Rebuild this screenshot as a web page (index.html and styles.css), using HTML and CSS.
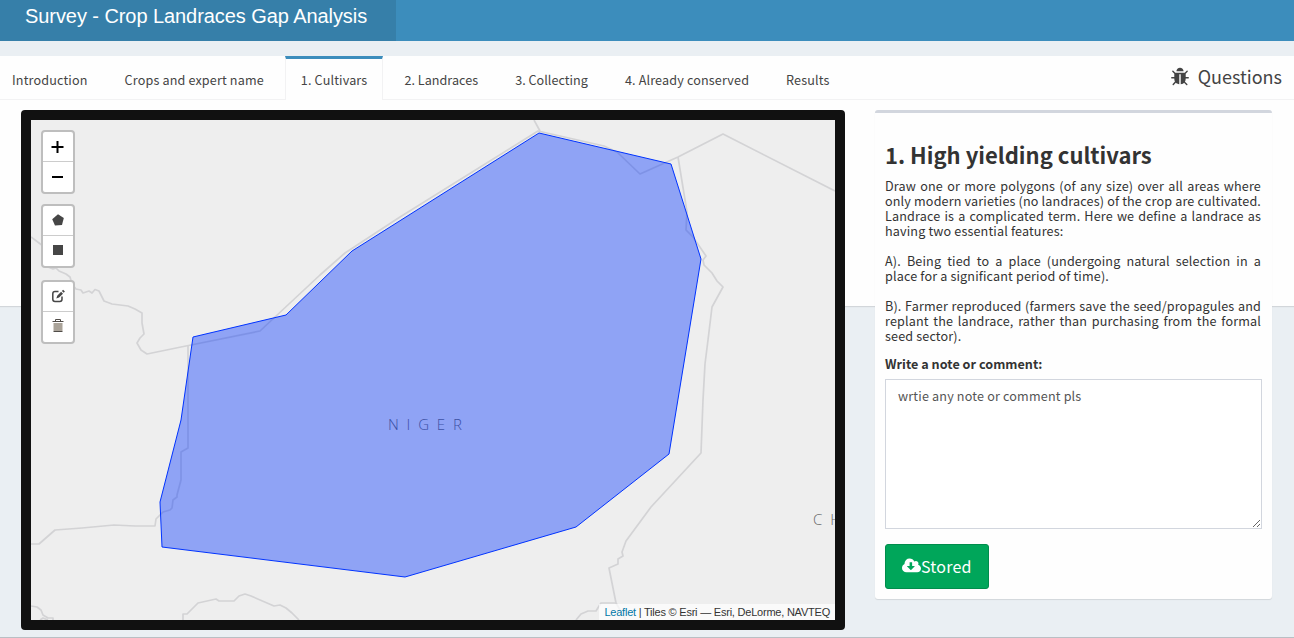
FILE: index.html
```html
<!DOCTYPE html>
<html lang="en">
<head>
<meta charset="utf-8">
<title>Survey - Crop Landraces Gap Analysis</title>
<link rel="stylesheet" href="styles.css">
</head>
<body>
<header class="header"><div class="logo">Survey - Crop Landraces Gap Analysis</div></header>
<main class="panel">
  <nav class="tabs">
    <a class="tab">Introduction</a>
    <a class="tab">Crops and expert name</a>
    <a class="tab active">1. Cultivars</a>
    <a class="tab snug">2. Landraces</a>
    <a class="tab snug">3. Collecting</a>
    <a class="tab">4. Already conserved</a>
    <a class="tab">Results</a>
    <div class="questions">
      <svg class="bug" viewBox="0 0 1792 1792"><path d="M1696 960q0 26-19 45t-45 19h-224q0 171-67 290l208 209q19 19 19 45t-19 45q-18 19-45 19t-45-19l-198-197q-5 5-15 13t-42 28.500-65 36.500-82 29-97 13v-896h-128v896q-51 0-101.500-13.500t-87-33-66-39-43.500-32.500l-15-14-183 207q-20 21-48 21-24 0-43-16-19-18-20.500-44.500t15.500-46.500l202-227q-58-114-58-274h-224q-26 0-45-19t-19-45 19-45 45-19h224v-294l-173-173q-19-19-19-45t19-45 45-19 45 19l173 173h844l173-173q19-19 45-19t45 19 19 45-19 45l-173 173v294h224q26 0 45 19t19 45zm-480-576h-640q0-133 93.500-226.500t226.500-93.500 226.500 93.500 93.500 226.500z"/></svg>
      <span>Questions</span>
    </div>
  </nav>
  <div class="content">
    <section class="map">
      <svg class="map-canvas" viewBox="31 120 804 500">
        <g class="borders">
          <path d="M31 237L43 246L48 267L53 269L56 268L59 271L66 274L70 277L72 284L76 289L81 290L83 293L89 291L92 293L95 289.500L99 291L104 301L112 304L128 306L135 309L142 313V323L144 334L140 338L137 343L141 350L147 354L181 347L260 331L290 303L320 275L345 253L400 217L538 131L604 146L617 152L640 174L678 157L723 134L835 191"/>
          <path d="M534 120L540 131"/>
          <path d="M678 157L687 212L686 230L693 237L706 256L703 260L704 265L712 273L717 281L723 287L712 307L708 340L705 364L703 400L701 453L651 507L626 541L622 552L623 556L618 559V564L609 568L616 603L626 620"/>
          <path d="M576 620L581 614L588 611H596L601 603H616"/>
          <path d="M188 345V448L181 452V480L177 495V497L173 500L172 508L170 510L163 512L156 519L155 526H135L114 525L82 528L55 530L39 544H31"/>
          <path d="M31 606L37 607L41 610L43 615L48 618H53V620M40 620L43 618L48 620"/>
          <path d="M183 620V614H187L198 603L216 599L219 601H234L239 596L245 594L251 596L274 606L280 605L286 608L292 613L299 620"/>
        </g>
        <g class="country"><text x="388" y="430" textLength="74">NIGER</text><text x="813" y="525" letter-spacing="8">CH</text></g>
        <path class="area" d="M539 133L671 164L701 259L669 454L576 527L405 577L162 547L160 502L181 420L193 337L286 315L352 251Z"/>
      </svg>
      <div class="controls">
        <div class="bar"><a><svg viewBox="0 0 30 30"><path class="sign" d="M8.500 15H20.500M14.500 9V21"/></svg></a><a><svg viewBox="0 0 30 30"><path class="sign" d="M9 15H20"/></svg></a></div>
        <div class="bar"><a><svg viewBox="0 0 30 30"><path class="tool" d="M15 8.200L20.800 12L19 19L12 19.500L9.200 13.200Z"/></svg></a><a><svg viewBox="0 0 30 30"><path class="tool" d="M10 9H20V19H10Z"/></svg></a></div>
        <div class="bar"><a><svg viewBox="0 0 30 30"><path class="pen" d="M15.500 9.500H12Q9.800 9.500 9.800 11.700V17.300Q9.800 19.500 12 19.500H16.800Q19 19.500 19 17.300V14.500"/><path class="tool" d="M13.300 16.500L14.200 13.700L18.100 9.800L20 11.700L16.100 15.600ZM18.900 9L20.100 7.800L21.900 9.600L20.700 10.800Z"/></svg></a><a><svg viewBox="0 0 30 30"><path class="bin" d="M10.500 11H19.500V19H10.500Z"/><path class="lid" d="M9.500 9.500H20.500M12.500 9V7.500H17.500V9M10.500 19.500H19.500"/></svg></a></div>
      </div>
      <div class="attribution"><a>Leaflet</a> | Tiles © Esri — Esri, DeLorme, NAVTEQ</div>
    </section>
    <aside class="box">
      <h1>1. High yielding cultivars</h1>
      <p>Draw one or more polygons (of any size) over all areas where only modern varieties (no landraces) of the crop are cultivated. Landrace is a complicated term. Here we define a landrace as having two essential features:</p>
      <p>A). Being tied to a place (undergoing natural selection in a place for a significant period of time).</p>
      <p>B). Farmer reproduced (farmers save the seed/propagules and replant the landrace, rather than purchasing from the formal seed sector).</p>
      <label for="note">Write a note or comment:</label>
      <textarea id="note">wrtie any note or comment pls</textarea>
      <button class="stored"><svg viewBox="-64 0 1920 1792"><path d="M1216 928q0-14-9-23t-23-9h-224v-352q0-13-9.500-22.500t-22.500-9.500h-192q-13 0-22.500 9.500t-9.500 22.500v352h-224q-13 0-22.500 9.500t-9.500 22.500q0 14 9 23l352 352q9 9 23 9t23-9l351-351q10-12 10-24zm640 224q0 159-112.500 271.500t-271.500 112.500h-1088q-185 0-316.500-131.500t-131.500-316.500q0-130 70-240t188-165q-2-30-2-43 0-212 150-362t362-150q156 0 285.500 87t188.500 231q71-62 166-62 106 0 181 75t75 181q0 76-41 138 130 31 213.500 135.500t83.500 238.500z"/></svg><span>Stored</span></button>
    </aside>
  </div>
</main>
</body>
</html>
```

FILE: styles.css
```css
* { box-sizing: border-box; }
body {
  margin: 0;
  height: 638px;
  overflow: hidden;
  background: #eaeff3;
  border-bottom: 1px solid #b9bfc4;
  color: #333;
  font: 12.6px/15px "Noto Sans CJK SC", "Noto Sans", sans-serif;
  letter-spacing: .15px;
}
.header { height: 41px; background: #3c8dbc; }
.logo {
  width: 396px;
  height: 41px;
  padding-left: 25px;
  background: #367fa9;
  color: #fff;
  font: 20px/32px "Liberation Sans", Arial, sans-serif;
  letter-spacing: -.07px;
  white-space: nowrap;
}
.panel { height: 250px; margin-top: 15px; background: #fefefe; box-shadow: 0 1px 1px rgba(0,0,0,.1); }
.tabs {
  display: flex;
  gap: 5px;
  height: 44px;
  margin-left: -4px;
  border-bottom: 1px solid #f2f2f3;
  white-space: nowrap;
}
.tab {
  height: 44px;
  padding: 13px 15px 0;
  border: 1px solid transparent;
  border-width: 3px 1px 0;
  color: #444;
}
.snug { letter-spacing: .03px; }
.active { background: #fefefe; border-color: #3c8dbc #f2f2f3; }
.questions {
  display: flex;
  align-items: center;
  gap: 8px;
  height: 41px;
  margin-left: auto;
  padding-right: 12px;
  color: #444;
  font-size: 18px;
  letter-spacing: 0;
}
.bug { width: 20px; height: 20px; fill: #444; }
.content { display: flex; align-items: flex-start; gap: 30px; padding: 10px 22px 0 21px; }
.map { position: relative; width: 824px; height: 520px; border: 10px solid #111; border-radius: 4px; background: #eee; }
.map-canvas { display: block; width: 804px; height: 500px; }
.borders { fill: none; stroke: #d3d3d5; stroke-width: 1.7; stroke-linejoin: round; }
.country { fill: #666; font: 300 15px "Open Sans", "Noto Sans", sans-serif; }
.area { fill: #03f; fill-opacity: .4; stroke: #03f; stroke-width: 1; }
.controls { position: absolute; left: 10px; top: 10px; display: grid; gap: 10px; }
.bar { width: 34px; height: 64px; border: 2px solid #bebebe; border-radius: 4px; background: #fff; }
.bar:last-child { margin-top: 2px; }
.bar a { display: block; height: 30px; }
.bar a:first-child { border-bottom: 1px solid #ccc; }
.bar svg { display: block; width: 30px; height: 30px; }
.sign { fill: none; stroke: #000; stroke-width: 2; }
.tool { fill: #464646; }
.pen { fill: none; stroke: #464646; stroke-width: 1.5; }
.bin { fill: #aaa399; }
.lid { fill: none; stroke: #504c48; }
.attribution {
  position: absolute;
  right: 0;
  bottom: 0;
  height: 16px;
  padding: 0 5px;
  background: rgba(255,255,255,.7);
  font: 11px/16px "Liberation Sans", Arial, sans-serif;
  letter-spacing: -.22px;
  white-space: nowrap;
}
.attribution a { color: #0078a8; }
.box {
  width: 397px;
  height: 489px;
  padding: 31px 10px 0;
  border-top: 3px solid #d2d6de;
  border-radius: 3px;
  background: #fefefe;
  box-shadow: 0 1px 1px rgba(0,0,0,.1);
}
h1 { margin: 0 0 14px; font-size: 22px; line-height: 20px; font-weight: 700; letter-spacing: 0; }
p { width: 376px; margin: 0 0 15px; text-align: justify; }
label { display: block; margin-top: -2px; font-weight: 700; letter-spacing: .03px; }
textarea {
  display: block;
  width: 377px;
  height: 150px;
  margin: 8px 0 15px;
  padding: 8px 12px;
  border: 1px solid #d2d6de;
  background: #fff;
  color: #555;
  font: inherit;
  letter-spacing: .17px;
  resize: vertical;
}
.stored {
  display: flex;
  align-items: center;
  width: 104px;
  height: 45px;
  padding: 0 16px 1px;
  border: 1px solid #008d4c;
  border-radius: 3px;
  background: #00a65a;
  color: #fff;
  font: 16px/24px "Noto Sans CJK SC", "Noto Sans", sans-serif;
  letter-spacing: .2px;
}
.stored svg { width: 19px; height: 18px; fill: #fff; }
```
